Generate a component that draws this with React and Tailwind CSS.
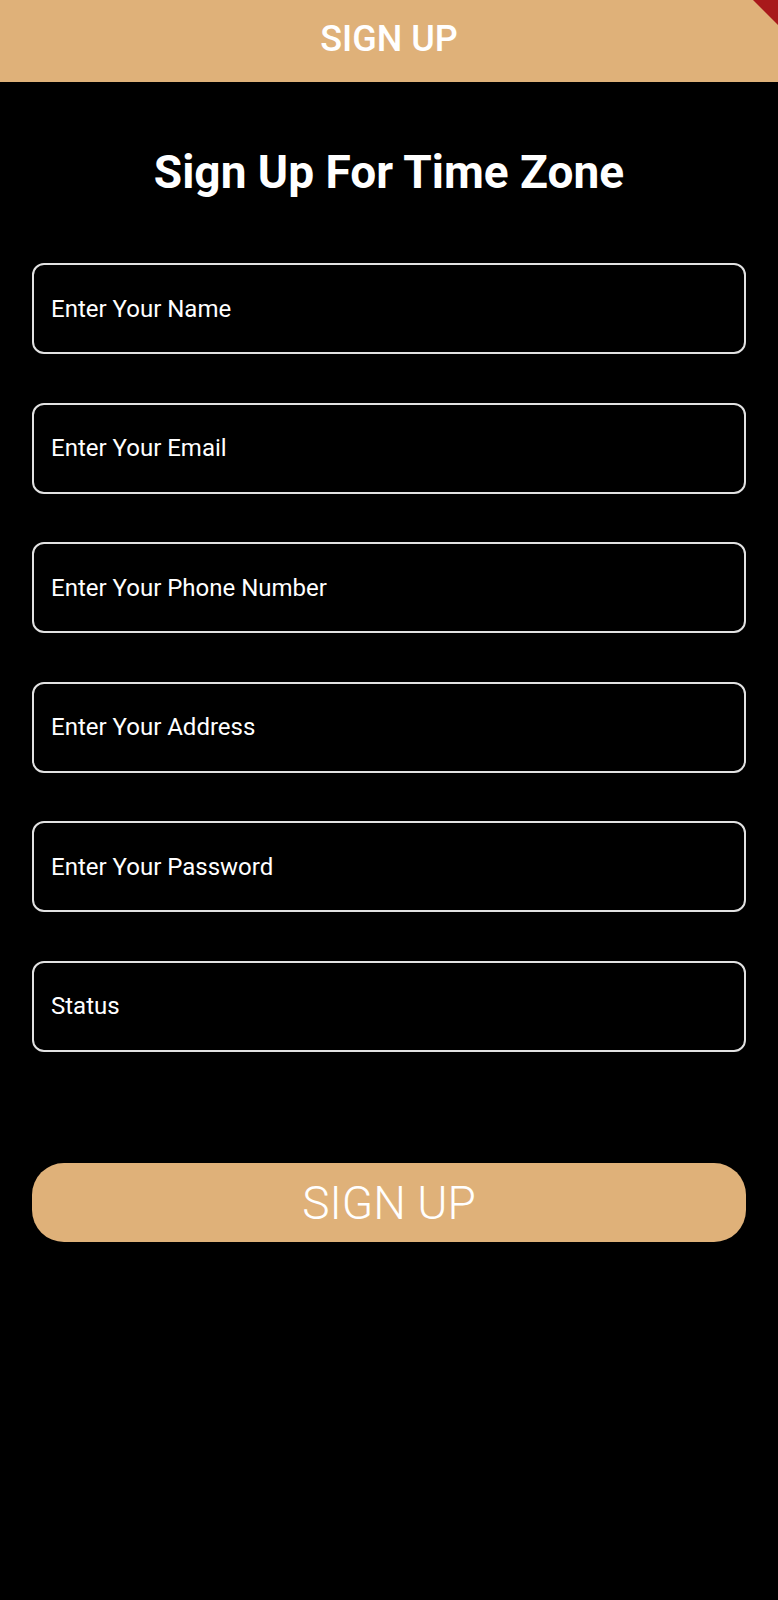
import React from "react";

const fields = [
  "Enter Your Name",
  "Enter Your Email",
  "Enter Your Phone Number",
  "Enter Your Address",
  "Enter Your Password",
  "Status",
];

const App = () => {
  return (
    <div className="min-h-screen bg-black font-['Roboto',sans-serif] relative overflow-hidden">
      {/* App bar */}
      <header className="h-[82px] bg-[#dfb179] flex items-center justify-center pb-[4px]">
        <h1 className="text-white text-[36px] leading-none font-medium">SIGN UP</h1>
      </header>

      {/* debug banner corner */}
      <div className="absolute top-0 right-0 w-0 h-0 border-t-[25px] border-l-[25px] border-t-[#a8191b] border-l-transparent"></div>

      <main className="px-8">
        <h2 className="mt-[67px] text-center text-white font-bold text-[46px] leading-none">
          Sign Up For Time Zone
        </h2>

        <form className="mt-[68px] flex flex-col gap-[48.5px]" onSubmit={(e) => e.preventDefault()}>
          {fields.map((label) => (
            <div
              key={label}
              className="h-[91px] rounded-xl border-2 border-[#e2e2e2] flex items-center"
            >
              <input
                type={label === "Enter Your Password" ? "password" : "text"}
                placeholder={label}
                className="w-full bg-transparent outline-none px-[17px] text-[24px] text-white placeholder:text-white font-['Roboto',sans-serif]"
              />
            </div>
          ))}

          <button
            type="submit"
            className="mt-[63px] h-[79px] rounded-[32px] bg-[#dfb179] text-white text-[46px] font-light leading-none"
          >
            SIGN UP
          </button>
        </form>
      </main>
    </div>
  );
};

export default App;
